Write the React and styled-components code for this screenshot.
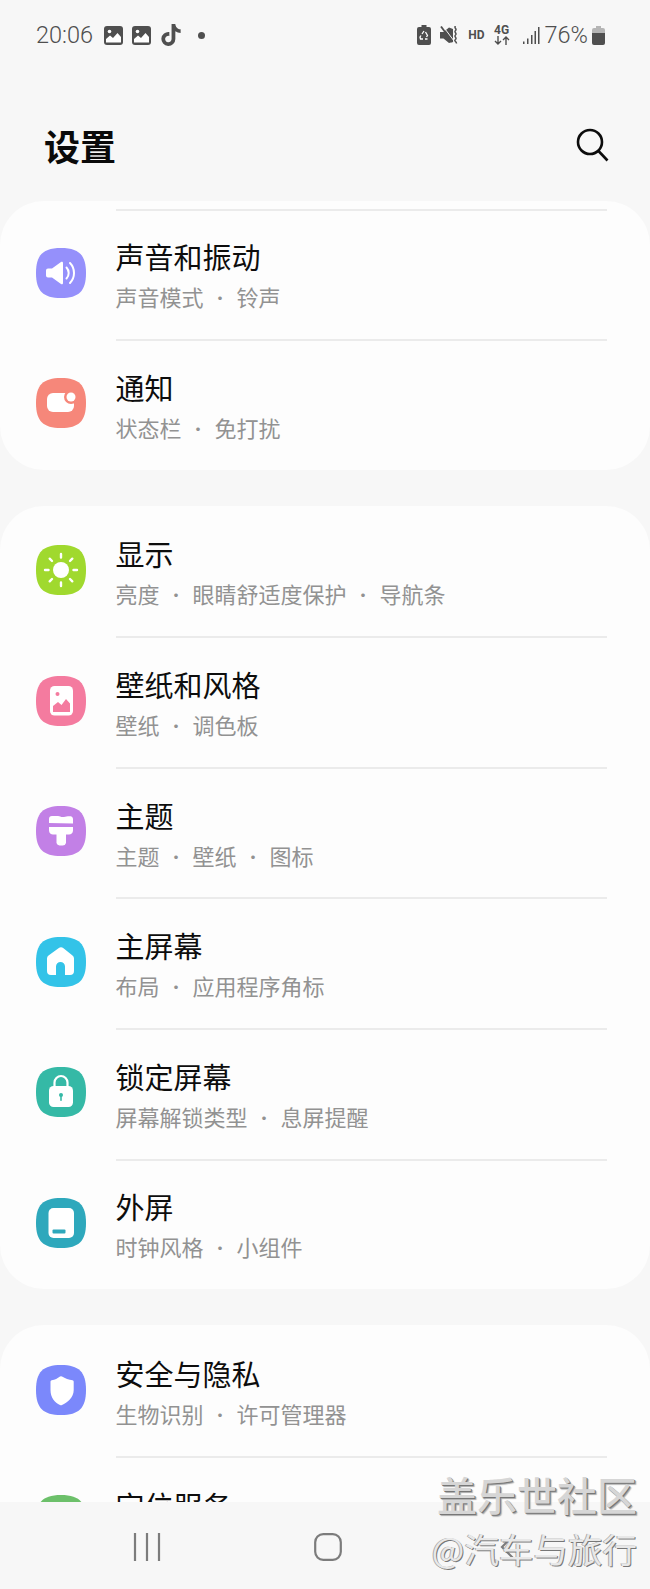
import React from 'react'
import styled, { createGlobalStyle } from 'styled-components'
import { FaTiktok } from 'react-icons/fa'

const GlobalStyle = createGlobalStyle`
    html, body {
        margin: 0;
        padding: 0;
        background: #f7f7f7;
    }
`

const SECTIONS = [
    {
        top: true,
        rows: [
            { icon: 'sound', color: '#9590fb', title: '声音和振动', sub: ['声音模式', '铃声'] },
            { icon: 'notify', color: '#f6877a', title: '通知', sub: ['状态栏', '免打扰'] },
        ],
    },
    {
        rows: [
            { icon: 'display', color: '#a0d92e', title: '显示', sub: ['亮度', '眼睛舒适度保护', '导航条'] },
            { icon: 'wallpaper', color: '#f47b9f', title: '壁纸和风格', sub: ['壁纸', '调色板'] },
            { icon: 'theme', color: '#c280e6', title: '主题', sub: ['主题', '壁纸', '图标'] },
            { icon: 'home', color: '#33c3e8', title: '主屏幕', sub: ['布局', '应用程序角标'] },
            { icon: 'lock', color: '#35b9a6', title: '锁定屏幕', sub: ['屏幕解锁类型', '息屏提醒'] },
            { icon: 'cover', color: '#2ea8bc', title: '外屏', sub: ['时钟风格', '小组件'] },
        ],
    },
    {
        rows: [
            { icon: 'shield', color: '#7b88fb', title: '安全与隐私', sub: ['生物识别', '许可管理器'] },
            { icon: 'pin', color: '#6cc06a', title: '定位服务', sub: [] },
        ],
    },
]

function Glyph({ name, color }) {
    switch (name) {
        case 'sound':
            return (
                <>
                    <path d="M12 20.500h4L25 14c1-.7 2-.2 2 1v20c0 1.200-1 1.700-2 1l-9-6.500h-4a2 2 0 0 1-2-2v-5a2 2 0 0 1 2-2z" fill="#fff" />
                    <path d="M30.500 19.500a8 8 0 0 1 0 11M34 15a14.500 14.500 0 0 1 0 20" fill="none" stroke="#fff" strokeWidth="2" strokeLinecap="round" />
                </>
            )
        case 'notify':
            return (
                <>
                    <rect x="11" y="15" width="27" height="19" rx="6" fill="#fff" />
                    <circle cx="35" cy="19" r="7" fill={color} />
                    <circle cx="35" cy="19" r="4.500" fill="#fff" />
                </>
            )
        case 'display':
            return (
                <>
                    <circle cx="25" cy="25" r="8" fill="#fff" />
                    <path
                        d="M25 9v3.500M25 37.500V41M9 25h3.500M37.500 25H41M13.700 13.700l2.300 2.300M34 34l2.300 2.300M13.700 36.300l2.300-2.300M34 16l2.300-2.300"
                        fill="none"
                        stroke="#fff"
                        strokeWidth="2.400"
                        strokeLinecap="round"
                    />
                </>
            )
        case 'wallpaper':
            return (
                <>
                    <rect x="14" y="10" width="23" height="29.500" rx="4.500" fill="#fff" />
                    <circle cx="21.500" cy="18" r="2" fill={color} />
                    <path d="M17 36v-6l5-4 3.500 3 4.500-6 4 4.500V36z" fill={color} />
                </>
            )
        case 'theme':
            return (
                <>
                    <path d="M13 13c0-2 1-3 3-3h6c2 0 3 1.500 6 1 3-.5 9-2 9 2v4.500l-24-.5z" fill="#fff" />
                    <path d="M13 21h24v3.500c0 2.500-2 4-4 4h-3V37a3.500 3.500 0 0 1-3.500 2.500h-3A3.500 3.500 0 0 1 20.500 37v-8.500H17c-2 0-4-1.500-4-4z" fill="#fff" />
                </>
            )
        case 'home':
            return (
                <path
                    d="M22.500 11.200a4 4 0 0 1 5 0l9 7.300a4 4 0 0 1 1.500 3.100V34a4 4 0 0 1-4 4h-5V29.500a4.500 4.500 0 0 0-9 0V38h-5a4 4 0 0 1-4-4V21.600a4 4 0 0 1 1.500-3.100z"
                    fill="#fff"
                />
            )
        case 'lock':
            return (
                <>
                    <path d="M18.500 20v-4.500a6.500 6.500 0 0 1 13 0V20" fill="none" stroke="#fff" strokeWidth="2.200" />
                    <rect x="13" y="19" width="24" height="21" rx="4.500" fill="#fff" />
                    <circle cx="25" cy="28" r="2" fill={color} />
                    <rect x="24.200" y="28" width="1.600" height="6" rx=".8" fill={color} />
                </>
            )
        case 'cover':
            return (
                <>
                    <rect x="12.500" y="10" width="25.500" height="30" rx="5" fill="#fff" />
                    <rect x="16.500" y="31.500" width="13" height="4" rx="1" fill={color} />
                </>
            )
        case 'shield':
            return <path d="M24 11.500a2 2 0 0 1 2 0c3 2 7 3.200 10.500 3.700.8.100 1.200.7 1.200 1.500V25c0 7.500-6.500 12.800-11.700 15a2.500 2.500 0 0 1-2 0C18.800 37.800 14.500 32.500 14.500 25v-8.300c0-.8.400-1.400 1.200-1.500 3.300-.5 5.800-1.700 8.300-3.700z" fill="#fff" />
        case 'pin':
            return <path d="M25 10a11 11 0 0 1 11 11c0 8-11 19-11 19S14 29 14 21a11 11 0 0 1 11-11z" fill="#fff" />
        default:
            return null
    }
}

function RowIcon({ name, color }) {
    return (
        <IconSvg viewBox="0 0 50 50">
            <path d="M25 0C43 0 50 7 50 25S43 50 25 50 0 43 0 25 7 0 25 0z" fill={color} />
            <Glyph name={name} color={color} />
        </IconSvg>
    )
}

function PictureNote() {
    return (
        <svg width="19" height="19" viewBox="0 0 19 19">
            <rect width="19" height="19" rx="3" fill="#4f4f4f" />
            <circle cx="5.500" cy="5.500" r="1.800" fill="#fff" />
            <path d="M2 16.500V13l4-3.500 3 2.500 4.500-5 3.500 4v5.500z" fill="#fff" />
        </svg>
    )
}

function StatusIcons() {
    return (
        <StatusRight>
            <svg width="14" height="20" viewBox="0 0 14 20">
                <path d="M4.500 0h5v2H12a2 2 0 0 1 2 2v14a2 2 0 0 1-2 2H2a2 2 0 0 1-2-2V4a2 2 0 0 1 2-2h2.500z" fill="#4f4f4f" />
                <path d="M7 6l-2 3M8.500 7l2 3.500-1 1.500M6 14H3.500l-.5-2 1-1.500M8 14h2.500" fill="none" stroke="#fff" strokeWidth="1.300" />
            </svg>
            <StatusSlot $gap={9}>
                <svg width="18" height="18" viewBox="0 0 18 18">
                    <path d="M0 6h3.500L9 1.500l4 1.500v13L9 17 3.500 12.500H0z" fill="#4f4f4f" />
                    <path d="M1 0l12 16" stroke="#f7f7f7" strokeWidth="1" transform="translate(1.200 -.8)" />
                    <path d="M1 .5l11.500 15.500" stroke="#4f4f4f" strokeWidth="1.800" />
                    <path d="M15.500 0c-2 2 2 3 0 4.500s2 3 0 4.500 2 3 0 4.500 1 2 1 4" fill="none" stroke="#4f4f4f" strokeWidth="1.500" />
                </svg>
            </StatusSlot>
            <StatusSlot $gap={10}>
                <Hd>HD</Hd>
            </StatusSlot>
            <StatusSlot $gap={9}>
                <Net>
                    <NetLabel>4G</NetLabel>
                    <svg width="16" height="9" viewBox="0 0 16 9">
                        <path d="M4 0v8M1 5l3 3 3-3M12 9V1M9 4l3-3 3 3" fill="none" stroke="#4f4f4f" strokeWidth="1.400" />
                    </svg>
                </Net>
            </StatusSlot>
            <StatusSlot $gap={12}>
                <svg width="18" height="19" viewBox="0 0 18 19">
                    <path d="M1 15.500h1.500V18H1zM5 12.500h1.500V18H5zM9 9h1.500v9H9zM12.500 5H14v13h-1.500zM16 1h1.500v17H16z" fill="#4f4f4f" />
                </svg>
            </StatusSlot>
            <StatusSlot $gap={5}>
                <Battery>76%</Battery>
            </StatusSlot>
            <StatusSlot $gap={4}>
                <svg width="13" height="19" viewBox="0 0 13 19">
                    <path d="M4 0h5v2h2a2 2 0 0 1 2 2v3H0V4a2 2 0 0 1 2-2h2z" fill="#b5b5b5" />
                    <path d="M0 7h13v10a2 2 0 0 1-2 2H2a2 2 0 0 1-2-2z" fill="#4f4f4f" />
                </svg>
            </StatusSlot>
        </StatusRight>
    )
}

function SettingRow({ row, divided }) {
    return (
        <Row>
            <RowIcon name={row.icon} color={row.color} />
            <RowBody $divided={divided}>
                <Title>{row.title}</Title>
                <Sub>
                    {row.sub.map((part, index) => (
                        <React.Fragment key={part}>
                            {index > 0 && <Dot>•</Dot>}
                            {part}
                        </React.Fragment>
                    ))}
                </Sub>
            </RowBody>
        </Row>
    )
}

export default function App() {
    return (
        <Page>
            <GlobalStyle />
            <StatusBar>
                <StatusLeft>
                    <Clock>20:06</Clock>
                    <PictureNote />
                    <PictureNote />
                    <FaTiktok size={22} color="#4f4f4f" />
                    <MoreDot />
                </StatusLeft>
                <StatusIcons />
            </StatusBar>
            <Header>
                <Heading>设置</Heading>
                <svg width="36" height="36" viewBox="0 0 36 36">
                    <circle cx="16" cy="15" r="12" fill="none" stroke="#0c0c0c" strokeWidth="2.600" />
                    <path d="M24.500 24l9 9.500" stroke="#0c0c0c" strokeWidth="2.600" />
                </svg>
            </Header>
            <Scroller>
                {SECTIONS.map((section) => (
                    <Card key={section.rows[0].icon} $top={section.top}>
                        {section.rows.map((row, index) => (
                            <SettingRow key={row.icon} row={row} divided={section.top || index > 0} />
                        ))}
                    </Card>
                ))}
            </Scroller>
            <NavBar>
                <svg width="28" height="28" viewBox="0 0 28 28">
                    <path d="M2 0v28M14 0v28M26 0v28" stroke="#7c7c7c" strokeWidth="2.200" />
                </svg>
                <svg width="28" height="28" viewBox="0 0 28 28">
                    <rect x="1.200" y="1.200" width="25.600" height="25.600" rx="8" fill="none" stroke="#7c7c7c" strokeWidth="2.200" />
                </svg>
                <svg width="28" height="28" viewBox="0 0 28 28">
                    <path d="M19 2L7 14l12 12" fill="none" stroke="#7c7c7c" strokeWidth="2.200" />
                </svg>
            </NavBar>
            <Watermark>
                <WatermarkName>盖乐世社区</WatermarkName>
                <WatermarkUser>@汽车与旅行</WatermarkUser>
            </Watermark>
        </Page>
    )
}

const Page = styled.div`
    position: relative;
    display: flex;
    flex-direction: column;
    width: 650px;
    height: 1589px;
    overflow: hidden;
    background: #f7f7f7;
    font-family: "Noto Sans CJK SC", "Noto Sans", sans-serif;
`

const StatusBar = styled.div`
    display: flex;
    align-items: center;
    justify-content: space-between;
    height: 70px;
    padding: 0 45px 0 36px;
    flex-shrink: 0;
`

const StatusLeft = styled.div`
    display: flex;
    align-items: center;
    gap: 9px;
`

const StatusRight = styled.div`
    display: flex;
    align-items: center;
`

const StatusSlot = styled.div`
    display: flex;
    align-items: center;
    margin-left: ${(props) => props.$gap}px;
`

const Clock = styled.span`
    font-family: Roboto, sans-serif;
    font-weight: 300;
    font-size: 23.500px;
    color: #4f4f4f;
    margin-right: 2px;
`

const MoreDot = styled.span`
    width: 7px;
    height: 7px;
    margin-left: 7px;
    border-radius: 50%;
    background: #4f4f4f;
`

const Hd = styled.span`
    font-family: Roboto, sans-serif;
    font-weight: 700;
    font-size: 12px;
    color: #4f4f4f;
`

const Net = styled.div`
    display: flex;
    flex-direction: column;
    align-items: center;
    width: 16px;
    gap: 1px;
`

const NetLabel = styled.span`
    font-family: Roboto, sans-serif;
    font-weight: 700;
    font-size: 12px;
    line-height: 10px;
    color: #4f4f4f;
`

const Battery = styled.span`
    font-family: Roboto, sans-serif;
    font-weight: 300;
    font-size: 23.500px;
    color: #4f4f4f;
`

const Header = styled.header`
    display: flex;
    align-items: center;
    justify-content: space-between;
    height: 113px;
    padding: 18px 40px 0 44px;
    flex-shrink: 0;
`

const Heading = styled.h1`
    margin: 0;
    font-size: 36px;
    line-height: 46px;
    font-weight: 700;
    color: #0a0a0a;
`

const Scroller = styled.main`
    display: flex;
    flex-direction: column;
    gap: 36px;
    flex: 1;
    min-height: 0;
    overflow: hidden;
`

const Card = styled.section`
    flex-shrink: 0;
    padding-top: ${(props) => (props.$top ? '7.500px' : '0')};
    border-radius: 44px;
    background: #fdfdfd;
`

const Row = styled.div`
    display: flex;
    align-items: center;
    gap: 29.500px;
    height: 130.600px;
    padding-left: 36px;
`

const IconSvg = styled.svg`
    width: 50px;
    height: 50px;
    margin-bottom: 2px;
    flex-shrink: 0;
`

const RowBody = styled.div`
    flex: 1;
    align-self: stretch;
    display: flex;
    flex-direction: column;
    justify-content: center;
    margin-right: 43.500px;
    padding-top: 5px;
    box-sizing: border-box;
    border-top: 2px solid ${(props) => (props.$divided ? '#ebebeb' : 'transparent')};
`

const Title = styled.div`
    font-size: 29px;
    line-height: 40px;
    color: #0d0d0d;
`

const Sub = styled.div`
    min-height: 40px;
    font-size: 22px;
    line-height: 40px;
    color: #929292;
    white-space: nowrap;
`

const Dot = styled.span`
    display: inline-block;
    width: 33px;
    text-align: center;
    font-size: 17px;
    vertical-align: 1px;
`

const NavBar = styled.nav`
    display: flex;
    justify-content: center;
    gap: 153px;
    height: 87px;
    padding: 31px 0 0 6px;
    box-sizing: border-box;
    flex-shrink: 0;
`

const Watermark = styled.div`
    position: absolute;
    top: 1469px;
    right: 13px;
    display: flex;
    flex-direction: column;
    align-items: flex-end;
`

const WatermarkName = styled.div`
    font-size: 40px;
    line-height: 50px;
    font-weight: 500;
    color: #d6d6d6;
    text-shadow: 1px 1px 0 #777, 2px 2px 1px #aaa;
`

const WatermarkUser = styled.div`
    margin-top: 6px;
    font-size: 34.500px;
    line-height: 46px;
    color: #e8e8e8;
    text-shadow: 1px 1px 0 #777, -1px 0 0 #aaa;
`
